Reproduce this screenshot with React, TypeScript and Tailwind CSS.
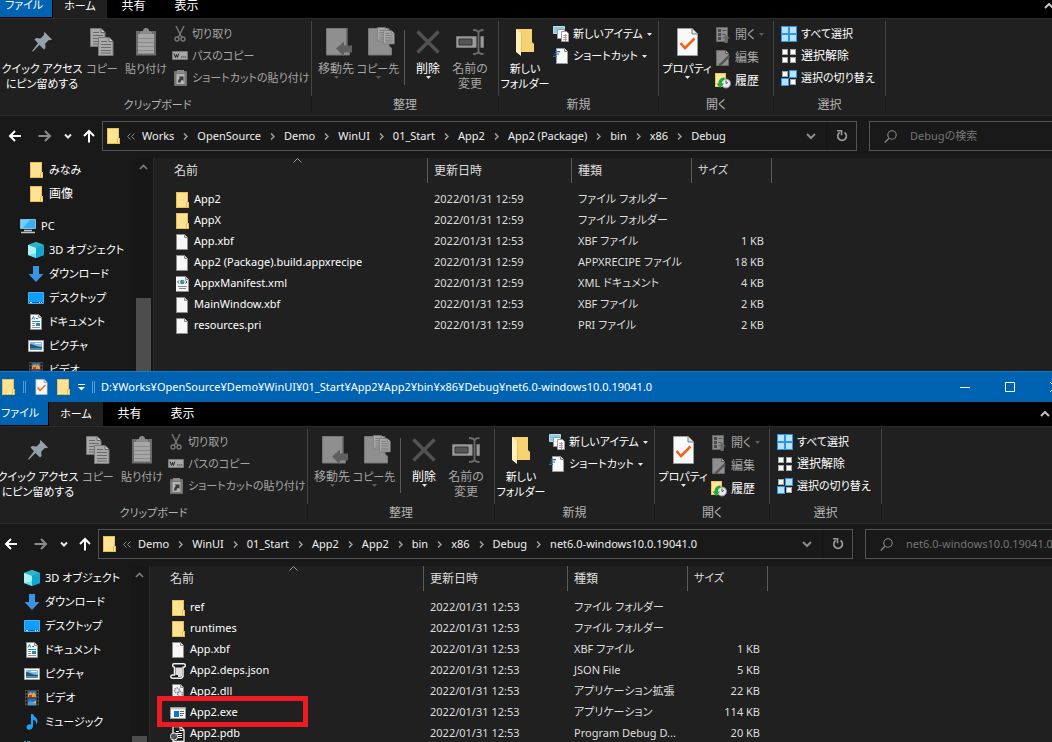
import React from 'react';

type IconProps = { className?: string };

/* Labels made mostly of kanji are set one step larger than kana and Latin ones. */
const kanjiLabel = /^[\u4e00-\u9fff]+[のく]?$/;
const textSize = (label: string) => (kanjiLabel.test(label) ? 'text-xs' : 'text-[11px]');

/* ---------- shared small drawings ---------- */

const Folder = ({ className = '' }: IconProps) => (
  <svg width="16" height="16" viewBox="0 0 16 16" className={`shrink-0 ${className}`} aria-hidden="true">
    <path d="M0 0h12v10h1v6H0z" fill="#e8bf4e" />
    <path d="M1 1h10v14H1z" fill="#ffe392" />
    <path d="M10.500 11h1.500v4h-1.500z" fill="#ffe9a8" />
    <path d="M10.500 10.500v5" stroke="#e8bf4e" />
  </svg>
);

const Page = ({ children }: { children?: React.ReactNode }) => (
  <svg width="16" height="16" viewBox="0 0 16 16" className="shrink-0" aria-hidden="true">
    <path d="M.5 .5h8l3 3v12H.5z" fill="#f7f7f7" stroke="#8d8d8d" />
    <path d="M8.500 .5v3h3" fill="#d8d8d8" stroke="#8d8d8d" />
    {children}
  </svg>
);

const XmlFile = () => (
  <svg width="16" height="16" viewBox="1 0 16 16" className="shrink-0" aria-hidden="true">
    <path d="M.5 .5h10l3 3v12H.5z" fill="#f7f7f7" stroke="#8d8d8d" />
    <path d="M10.500 .5v3h3" fill="#d8d8d8" stroke="#8d8d8d" />
    <path d="M4 4.500L2.500 6 4 7.500M10.500 4.500L12 6l-1.500 1.500" stroke="#444" fill="none" />
    <circle cx="7.300" cy="6" r="2.300" fill="#2a8a9c" />
    <circle cx="7.800" cy="5.500" r="1" fill="#59c36a" />
    <path d="M3 10.500h9M4 12.500h7" stroke="#888" />
  </svg>
);

const JsonFile = () => (
  <svg width="16" height="16" viewBox="0 0 16 16" className="-ml-0.5 mr-0.5 shrink-0" aria-hidden="true">
    <path d="M4 .8h9.700c1 0 1.600.7 1.600 1.700s-.6 1.700-1.600 1.700H13v8.300c0 1.700-1 2.700-2.500 2.700H2.300C1.300 15.200.8 14.400.8 13.600S1.300 12 2.300 12H4.500V4.200C3 4 2.700 3.300 2.700 2.500S3.200.8 4 .8z" fill="#151515" stroke="#f2f2f2" strokeWidth="1.500" />
    <path d="M5.500 4.500h6.500v8c0 1-.6 1.500-1.500 1.500H8V12H5.500z" fill="#dcdcdc" />
  </svg>
);

const DllFile = () => (
  <Page>
    <circle cx="5" cy="6.500" r="2.500" fill="#e4e8ec" stroke="#7e8b96" strokeDasharray="1.500 .7" strokeWidth="1.400" />
    <circle cx="8" cy="10" r="2.500" fill="#e4e8ec" stroke="#7e8b96" strokeDasharray="1.500 .7" strokeWidth="1.400" />
  </Page>
);

const ExeFile = () => (
  <svg width="16" height="16" viewBox="0 0 16 16" className="-ml-0.5 mr-0.5 shrink-0" aria-hidden="true">
    <path d="M.5 2.500h15v11H.5z" fill="#fafafa" stroke="#9b9b9b" />
    <path d="M1 3h14v1.500H1z" fill="#c9c9c9" />
    <path d="M4 6h5v6H4z" fill="#0a78d4" />
    <path d="M10 6.500h4M10 8.500h4M10 10.500h3" stroke="#666" />
  </svg>
);

const PdbFile = () => (
  <svg width="16" height="16" viewBox="0 0 16 16" className="-ml-0.5 mr-0.5 shrink-0" aria-hidden="true">
    <path d="M3 .7h7.500l3.500 3.300v11.300H3z" fill="#1c1c1c" stroke="#f2f2f2" strokeWidth="1.300" />
    <path d="M10 1v3.500h4M6 5.500h3M6 7.500h6M8 9.500h4M8 11.500h4" stroke="#f2f2f2" fill="none" />
    <circle cx="4" cy="10.500" r="3.600" fill="#4a4a4a" stroke="#f2f2f2" />
    <path d="M1.500 13l5-5" stroke="#777" />
  </svg>
);

const CheckPage = ({ className = '' }: IconProps) => (
  <svg viewBox="0 0 21 28" className={className} aria-hidden="true">
    <path d="M.5 .5h14.500l5.500 5.500v21.500H.5z" fill="#f9f9f9" stroke="#9c9c9c" />
    <path d="M15 .5V6h5.500" fill="#e2e2e2" stroke="#7a7a7a" />
    <path d="M3.500 15l4.500 5L17.500 10.500" fill="none" stroke="#f0641e" strokeWidth="2.600" />
  </svg>
);

const Caret = ({ dim = false }: { dim?: boolean }) => (
  <svg width="5" height="3" viewBox="0 0 5 3" aria-hidden="true">
    <path d="M0 0h5L2.500 3z" fill={dim ? '#5c5c5c' : '#e6e6e6'} />
  </svg>
);

/* ---------- navigation tree drawings ---------- */

const Pc = () => (
  <svg width="16" height="16" viewBox="0 0 16 16" className="shrink-0" aria-hidden="true">
    <path d="M.5 1.500h15v9H.5z" fill="#35b0f5" stroke="#8fb9cf" />
    <path d="M1 2h9l-7 8H1z" fill="#6fcdff" />
    <path d="M4 12.500h8M1 14.500h14" stroke="#b5c6d1" strokeWidth="1.500" />
  </svg>
);
const Cube = () => (
  <svg width="16" height="16" viewBox="0 0 16 16" className="shrink-0" aria-hidden="true">
    <path d="M8 0l8 3v10l-8 3-8-3V3z" fill="#12a5cb" />
    <path d="M0 3l8-3 8 3-8 3z" fill="#2fb4c6" />
    <path d="M0 3l8 3v10l-8-3z" fill="#6fe0ea" />
    <path d="M0 3l8 3v5L0 13z" fill="#aef0f4" />
    <path d="M8 6l8-3v10l-8 3z" fill="#12a5d0" />
  </svg>
);
const Down = () => (
  <svg width="16" height="16" viewBox="0 0 16 16" className="shrink-0" aria-hidden="true">
    <path d="M5 0h6v8h4.500L8 16 .5 8H5z" fill="#3a93e4" />
  </svg>
);
const Desktop = () => (
  <svg width="16" height="16" viewBox="0 0 16 16" className="shrink-0" aria-hidden="true">
    <path d="M.5 2.500h15v11H.5z" fill="#129dfc" stroke="#3fb2ff" />
    <path d="M1 12.500h14" stroke="#0a63a8" />
    <path d="M2 12.500h2M11 12.500h1M13 12.500h1" stroke="#fff" />
  </svg>
);
const Doc = () => (
  <svg width="16" height="16" viewBox="0 0 16 16" className="shrink-0" aria-hidden="true">
    <path d="M2.500 .5h8l3 3v12h-11z" fill="#f7f7f7" stroke="#8d8d8d" />
    <path d="M10.500 .5v3h3" fill="#d8d8d8" stroke="#8d8d8d" />
    <path d="M4 5.500l1.500-3 1 3M8 4.500h2M4 7.500h8" stroke="#2b85c9" fill="none" />
    <path d="M4 9.500h3M4 11.500h3M4 13.500h8" stroke="#8899a6" />
    <path d="M8 9h4v3H8z" fill="#2783b8" />
  </svg>
);
const Picture = () => (
  <svg width="16" height="16" viewBox="0 0 16 16" className="shrink-0" aria-hidden="true">
    <path d="M.5 2.500h15v11H.5z" fill="#fff" stroke="#a5a5a5" />
    <path d="M2 4h12v8H2z" fill="#83bdea" />
    <path d="M2 6c4 0 6 3 12 3v1.500H2z" fill="#2b5470" />
    <path d="M2 10h12v2H2z" fill="#4a8fb8" />
    <path d="M7 5.500h6" stroke="#eaf5fc" />
  </svg>
);
const Video = () => (
  <svg width="16" height="16" viewBox="0 0 16 16" className="shrink-0" aria-hidden="true">
    <path d="M1 0h14v16H1z" fill="#4a4a4a" />
    <path d="M2.500 1v15M13.500 1v15" stroke="#111" strokeDasharray="2 1.500" strokeWidth="1.500" />
    <path d="M4 1h8v6H4zM4 9h8v6H4z" fill="#2c66c6" />
    <path d="M4 4l3-2 1 2 2-2 2 3v2H4z" fill="#e0a634" />
    <path d="M5 5h3v2H5z" fill="#c8334a" />
    <path d="M4 12l3-1 2 1 3-1v4H4z" fill="#3f9fe0" />
    <path d="M8 13l4-2v2z" fill="#e9b93e" />
  </svg>
);
const Music = () => (
  <svg width="16" height="16" viewBox="0 0 16 16" className="shrink-0" aria-hidden="true">
    <path d="M7 0h2c.3 2.500 4.500 3.500 4.500 7 0 1.500-.6 2.500-1.500 3.500.7-3-1-4-3-4.700V12c0 2-1.600 3.700-3.600 3.700S2.500 14.600 2.500 13 4 10.300 5.500 10.300c.6 0 1 .1 1.500.4z" fill="#1fa0fa" />
  </svg>
);
const Drive = () => (
  <svg width="16" height="16" viewBox="0 0 16 16" className="shrink-0" aria-hidden="true">
    <path d="M0 3h2v2H0zM3 3h3v2H3z" fill="#1aa6c8" />
    <path d="M.5 6.500h15v6H.5z" fill="#b9c3ca" stroke="#8c969c" />
  </svg>
);

/* ---------- ribbon drawings ---------- */

const Pin = () => (
  <svg width="22" height="22" viewBox="0 0 22 22" aria-hidden="true">
    <path d="M13.500 1L21 8.500l-2 .8-1.200-.3-3.600 3.800.3 4.200L13 18.500l-4.600-4.600L2 20.500 1 20l6-7.800L3.500 8.500 5 7l4.600.4 3.600-3.700-.4-1.300z" fill="#93a1ab" />
  </svg>
);
const SheetLines = ({ x, y }: { x: number; y: number }) => (
  <g transform={`translate(${x} ${y})`}>
    <path d="M.5 .5h10.500l4 4v14H.5z" fill="#a9a9a9" stroke="#777" />
    <path d="M11 .5v4h4" fill="#ccc" stroke="#666" />
    <path d="M3 4.500h6M3 7.500h10M3 10.500h10M3 13.500h10M3 16h10" stroke="#6a6a6a" />
  </g>
);
const Copy = () => (
  <svg width="26" height="28" viewBox="0 0 26 28" aria-hidden="true">
    <SheetLines x={1} y={0} />
    <SheetLines x={9} y={9} />
  </svg>
);
const Paste = () => (
  <svg width="22" height="28" viewBox="0 0 22 28" aria-hidden="true">
    <path d="M1 3h20v24.500H1z" fill="#6b6b6b" />
    <path d="M3 6h16v19.500H3z" fill="#a6a6a6" />
    <path d="M3 10.500h16M3 14.500h16M3 18.500h16M3 22.500h16" stroke="#8a8a8a" />
    <path d="M5 6V4l3-1c0-2 1-3 3-3s3 1 3 3l3 1v2z" fill="#8b8b8b" />
  </svg>
);
const MoveTo = () => (
  <svg width="34" height="30" viewBox="-6 0 34 30" aria-hidden="true">
    <path d="M1.500 1.500h20.500v17.500l2.500 2v7h-23z" fill="#8f8f8f" stroke="#777" />
    <path d="M22 1v18" stroke="#5e5e5e" />
    <path d="M11 21.500l8-7v4h8v7h-8v4z" fill="#5f5f5f" />
  </svg>
);
const CopyTo = () => (
  <svg width="34" height="30" viewBox="-6 0 34 30" aria-hidden="true">
    <path d="M1.500 1.500h20.500v17.500l2.500 2v7h-23z" fill="#8f8f8f" stroke="#777" />
    <g transform="translate(10 0) scale(.75)"><SheetLines x={0} y={0} /><SheetLines x={8} y={4} /></g>
  </svg>
);
const Delete = () => (
  <svg width="24" height="24" viewBox="0 0 24 24" aria-hidden="true">
    <path d="M1.500 1.500l21 21M22.500 1.500l-21 21" stroke="#525252" strokeWidth="3.500" />
  </svg>
);
const Rename = () => (
  <svg width="28" height="26" viewBox="0 0 28 26" aria-hidden="true">
    <path d="M.5 7.500h27v11H.5z" fill="#9b9b9b" stroke="#777" />
    <path d="M3 10h13v6H3z" fill="#555" stroke="#333" />
    <path d="M22.500 5v16" stroke="#1f1f1f" strokeWidth="4" />
    <path d="M22.500 2v22M17 1c3 0 5.500.4 5.500 3 0-2.600 2.500-3 5-3M17 25c3 0 5.500-.4 5.500-3 0 2.600 2.500 3 5 3" stroke="#6c6c6c" strokeWidth="1.800" fill="none" />
  </svg>
);
const NewFolder = () => (
  <svg width="20" height="28" viewBox="0 0 20 28" aria-hidden="true">
    <path d="M1 1h16v13l2 2v8H1z" fill="#f6d272" />
    <path d="M1 1l5 4v23l-5-4z" fill="#fff0ba" />
    <path d="M6.500 5v19" stroke="#e6bf5c" />
  </svg>
);
const Cut = () => (
  <svg width="12" height="16" viewBox="0 0 12 16" aria-hidden="true">
    <path d="M2 0l5.500 11M10 0L4.500 11" stroke="#777" strokeWidth="1.400" />
    <circle cx="3" cy="13" r="2" fill="none" stroke="#777" strokeWidth="1.400" />
    <circle cx="9" cy="13" r="2" fill="none" stroke="#777" strokeWidth="1.400" />
  </svg>
);
const CopyPath = () => (
  <svg width="16" height="10" viewBox="0 0 16 10" aria-hidden="true">
    <path d="M.5 .5h15v8H.5z" fill="#a8a8a8" stroke="#777" />
    <path d="M2 2.500l1.500 4 1-3 1 3 1.200-4M9 6h1.200M11.200 6h1.200M13.200 6h1" stroke="#222" fill="none" />
  </svg>
);
const PasteLink = () => (
  <svg width="13" height="16" viewBox="0 0 13 16" aria-hidden="true">
    <path d="M.5 1.500h12v14H.5z" fill="#777" stroke="#707070" />
    <path d="M3 0h7v3H3z" fill="#8a8a8a" />
    <path d="M2.500 4h8v10h-8z" fill="#b4b4b4" />
    <path d="M4 12.500c0-2 .6-3.500 2-4.500L4.800 6.500H9.500V11L8 9.700c-1 .6-1.500 1.500-1.500 2.800z" fill="#3a3a3a" />
  </svg>
);
const NewItem = () => (
  <svg width="16" height="16" viewBox="0 0 16 16" aria-hidden="true">
    <path d="M.5 .5h11v7H.5z" fill="#7fd0ee" stroke="#c4dbe6" />
    <path d="M4.500 3.500h7v9h-7z" fill="#fafafa" stroke="#999" />
    <path d="M8.500 5.500h5l2 2v8h-7z" fill="#fff" stroke="#999" />
    <path d="M10 9.500h4M10 11.500h4M10 13.500h4" stroke="#e0948b" />
    <path d="M12.500 8v7" stroke="#8ba5d0" />
  </svg>
);
const Shortcut = () => (
  <svg width="16" height="16" viewBox="0 0 16 16" aria-hidden="true">
    <path d="M3.500 .5h8l3 3v12h-11z" fill="#fafafa" stroke="#9a9a9a" />
    <path d="M11.500 .5v3h3" fill="#ddd" stroke="#888" />
    <path d="M2 3.700h5M1 6h5M0 8.300h4" stroke="#1f6fb8" strokeWidth="1.200" />
  </svg>
);
const Open = () => (
  <svg width="14" height="16" viewBox="0 0 14 16" aria-hidden="true">
    <path d="M.5 .5h11v14H.5z" fill="#8c8c8c" stroke="#666" />
    <path d="M2 2h3v3H2zM2 6h3v3H2zM2 10h3v3H2z" fill="#4a4a4a" />
    <path d="M6.500 3.500h4M6.500 7.500h3" stroke="#555" />
    <path d="M10 7.500l4 4h-2.500V16h-3v-4.500H6z" fill="#6a6a6a" />
  </svg>
);
const Edit = () => (
  <svg width="14" height="16" viewBox="0 0 14 16" aria-hidden="true">
    <path d="M.5 .5h9l3 3v12H.5z" fill="#8f8f8f" stroke="#6a6a6a" />
    <path d="M9.500 .5v3h3" fill="#bbb" stroke="#555" />
    <path d="M13.500 5.500L5 14l-2 1" stroke="#505050" strokeWidth="2.200" fill="none" />
  </svg>
);
const History = () => (
  <svg width="16" height="16" viewBox="0 0 16 16" aria-hidden="true">
    <path d="M0 0h11v14H0z" fill="#e8c45a" />
    <path d="M1 1h9v12H1z" fill="#ffe596" />
    <circle cx="11" cy="10.500" r="4.500" fill="#e8ebee" stroke="#8b9196" />
    <path d="M11 7.500V10.500l2-1" stroke="#555" fill="none" />
    <path d="M9.500 4.500c-4 0-6 2.500-6 6H1.500l3.700 4.500L9 10.500H6.700c0-2 .8-3.500 2.800-3.800z" fill="#1fa83c" />
  </svg>
);
const squares = [[0, 0], [9, 0], [0, 9], [9, 9]];
const SelectIcon = ({ on }: { on: boolean[] }) => (
  <svg width="16" height="16" viewBox="0 0 16 16" aria-hidden="true" shapeRendering="crispEdges">
    {squares.map(([x, y], i) =>
      on[i] ? (
        <g key={i}>
          <rect x={x ? 8 : 0} y={y ? 8 : 0} width="8" height="8" fill="#2f95ea" />
          <rect x={x ? 9 : 1} y={y ? 9 : 1} width="6" height="6" fill="#b9e2ff" />
        </g>
      ) : (
        <g key={i}>
          <rect x={x || 1} y={y || 1} width="6" height="6" fill="#a8a8a8" />
          <rect x={(x || 1) + 1} y={(y || 1) + 1} width="4" height="4" fill="#fff" />
        </g>
      ),
    )}
  </svg>
);

/* ---------- ribbon ---------- */

type BigProps = { icon: React.ReactNode; lines: string[]; width: string; dim?: boolean; caret?: 'on' | 'dim' };
const BigButton = ({ icon, lines, width, dim, caret }: BigProps) => (
  <button className={`flex shrink-0 flex-col items-center pt-1.5 ${width} ${dim ? 'text-[#a6a6a6]' : 'text-white'}`}>
    <span className="flex h-[30px] items-center">{icon}</span>
    <span className="mt-1 flex flex-col items-center whitespace-nowrap">
      {lines.map((l) => (
        <span key={l} className={`h-[15px] ${textSize(l)} leading-[15px]`}>{l}</span>
      ))}
    </span>
    {caret && <Caret dim={caret === 'dim'} />}
  </button>
);

type SmallProps = { icon: React.ReactNode; label: string; dim?: boolean; caret?: 'on' | 'dim'; tall?: boolean };
const SmallButton = ({ icon, label, dim, caret, tall }: SmallProps) => (
  <button className={`flex items-center gap-1 whitespace-nowrap ${tall ? 'h-[23px]' : 'h-[22px]'} ${textSize(label)} ${dim ? 'text-[#a6a6a6]' : 'text-white'}`}>
    <span className="flex w-4 justify-center">{icon}</span>
    {label}
    {caret && <Caret dim={caret === 'dim'} />}
  </button>
);

const Group = ({ label, width, children }: { label: string; width: string; children: React.ReactNode }) => (
  <section className={`flex shrink-0 flex-col pt-0.5 ${width}`}>
    <div className="flex h-[75px] items-start border-r border-[#444]">{children}</div>
    <h2 className={`h-4 border-r border-[#181818] text-center ${textSize(label)} leading-[18px] text-[#b4b4b4]`}>{label}</h2>
  </section>
);

const Ribbon = () => (
  <div className="flex h-[98px] shrink-0 border-y border-[#2d2d2d] bg-[#202020] pl-1">
    <Group label="クリップボード" width="w-[308px]">
      <BigButton icon={<Pin />} lines={['クイック アクセス', 'にピン留めする']} width="w-[76px]" />
      <BigButton icon={<Copy />} lines={['コピー']} width="w-11" dim />
      <BigButton icon={<Paste />} lines={['貼り付け']} width="w-11" dim />
      <div className="flex flex-col items-start pt-0.5 pl-1">
        <SmallButton icon={<Cut />} label="切り取り" dim />
        <SmallButton icon={<CopyPath />} label="パスのコピー" dim />
        <SmallButton icon={<PasteLink />} label="ショートカットの貼り付け" dim />
      </div>
    </Group>
    <Group label="整理" width="w-[187px]">
      <div className="flex pl-[3px]">
        <BigButton icon={<MoveTo />} lines={['移動先']} width="w-[42px]" dim caret="dim" />
        <BigButton icon={<CopyTo />} lines={['コピー先']} width="w-[42px]" dim caret="dim" />
        <span className="mt-[9px] mr-0.5 ml-[5px] h-[55px] w-px bg-[#5a5a5a]" />
        <BigButton icon={<Delete />} lines={['削除']} width="w-[42px]" caret="on" />
        <BigButton icon={<Rename />} lines={['名前の', '変更']} width="w-[42px]" dim />
      </div>
    </Group>
    <Group label="新規" width="w-[160px]">
      <div className="flex gap-1 pl-0.5">
        <BigButton icon={<NewFolder />} lines={['新しい', 'フォルダー']} width="w-12" />
        <div className="flex flex-col items-start pt-0.5">
          <SmallButton icon={<NewItem />} label="新しいアイテム" caret="on" />
          <SmallButton icon={<Shortcut />} label="ショートカット" caret="on" />
        </div>
      </div>
    </Group>
    <Group label="開く" width="w-[115px]">
      <div className="flex gap-1 pl-1">
        <BigButton icon={<CheckPage className="h-7 w-[21px]" />} lines={['プロパティ']} width="w-12" caret="on" />
        <div className="flex flex-col items-start pt-0.5">
          <SmallButton icon={<Open />} label="開く" dim caret="dim" tall />
          <SmallButton icon={<Edit />} label="編集" dim tall />
          <SmallButton icon={<History />} label="履歴" tall />
        </div>
      </div>
    </Group>
    <Group label="選択" width="w-28">
      <div className="flex flex-col items-start pt-0.5 pl-[7px]">
        <SmallButton icon={<SelectIcon on={[true, true, true, true]} />} label="すべて選択" />
        <SmallButton icon={<SelectIcon on={[false, false, false, false]} />} label="選択解除" />
        <SmallButton icon={<SelectIcon on={[false, true, true, false]} />} label="選択の切り替え" />
      </div>
    </Group>
  </div>
);

const Tabs = ({ height }: { height: string }) => (
  <div className={`flex shrink-0 items-end overflow-hidden bg-black text-white ${height}`}>
    <button className="mb-px h-[23px] w-[52px] bg-[#0063b1] pr-1">ファイル</button>
    <button className="ml-px h-6 w-[54px] bg-[#202020]">ホーム</button>
    <button className="h-6 w-[53px] text-xs">共有</button>
    <button className="h-6 w-[53px] text-xs">表示</button>
    <button aria-label="リボンの最小化" className="mr-0.5 ml-auto flex h-6 items-center">
      <svg width="10" height="6" viewBox="0 0 10 6" aria-hidden="true">
        <path d="M1 5l4-4 4 4" fill="none" stroke="#c4c4c4" strokeWidth="2" />
      </svg>
    </button>
  </div>
);

/* ---------- address row ---------- */

const Arrow = ({ d, color, label, box }: { d: string; color: string; label: string; box: string }) => (
  <button aria-label={label} className={`flex shrink-0 items-center justify-center ${box}`}>
    <svg width="14" height="14" viewBox="0 0 14 14" aria-hidden="true">
      <path d={d} fill="none" stroke={color} strokeWidth="2" />
    </svg>
  </button>
);

const AddressRow = ({ crumbs, search }: { crumbs: string[]; search: string }) => (
  <div className="flex h-[42px] shrink-0 bg-[#191919] pt-[5px] pb-[7px] pl-1">
    <nav className="flex w-[98px] shrink-0 items-center">
      <Arrow label="戻る" box="w-[22px]" color="#fff" d="M13 7H2M7 2L2 7l5 5" />
      <Arrow label="進む" box="ml-2 w-[22px]" color="#8a8a8a" d="M.5 7H12M7 2l5 5-5 5" />
      <Arrow label="最近の場所" box="ml-0.5 w-5" color="#e8e8e8" d="M4 5.500l3 3 3-3" />
      <Arrow label="上へ" box="w-[22px]" color="#fff" d="M7 13.500V2M2 7l5-5 5 5" />
    </nav>
    <div className="flex min-w-0 flex-1 items-center border border-[#535353] text-[#f0f0f0]">
      <Folder className="ml-1" />
      <svg width="8" height="7" viewBox="0 0 8 7" className="mr-[7px] ml-1 shrink-0" aria-hidden="true">
        <path d="M3.500 .5l-3 3 3 3M7.500 .5l-3 3 3 3" fill="none" stroke="#8a8a8a" />
      </svg>
      {crumbs.map((c, i) => (
        <React.Fragment key={i}>
          {i > 0 && (
            <svg width="5" height="7" viewBox="0 0 5 7" className="mx-[9px] shrink-0" aria-hidden="true">
              <path d="M1 .5l3 3-3 3" fill="none" stroke="#a0a0a0" strokeWidth="1.500" />
            </svg>
          )}
          <button className="whitespace-nowrap">{c}</button>
        </React.Fragment>
      ))}
      <button aria-label="履歴" className="ml-auto flex h-full w-[30px] shrink-0 items-center justify-center">
        <svg width="10" height="7" viewBox="0 0 10 7" aria-hidden="true">
          <path d="M1 1l4 4 4-4" fill="none" stroke="#8c8c8c" strokeWidth="2" />
        </svg>
      </button>
      <button aria-label="更新" className="flex h-full w-[30px] shrink-0 items-center justify-center border-l border-[#141414]">
        <svg width="12" height="12" viewBox="0 0 12 12" aria-hidden="true">
          <path d="M8.500 2.500A4.300 4.300 0 1 1 3.700 2.500" fill="none" stroke="#9a9a9a" strokeWidth="1.700" />
          <path d="M1 .8h4.500v4.500" fill="none" stroke="#9a9a9a" strokeWidth="1.600" />
        </svg>
      </button>
    </div>
    <label className="ml-3 flex w-[187px] shrink-0 items-center border border-r-0 border-[#535353] pl-3.5">
      <svg width="13" height="13" viewBox="0 0 13 13" className="shrink-0" aria-hidden="true">
        <circle cx="8" cy="5" r="4.200" fill="none" stroke="#8a8a8a" strokeWidth="1.100" />
        <path d="M5 8.200L.7 12.500" stroke="#8a8a8a" strokeWidth="1.300" />
      </svg>
      <input type="text" aria-label={search} placeholder={search} className="ml-[13px] w-full min-w-0 bg-transparent text-white outline-none placeholder:text-[#757575]" />
    </label>
  </div>
);

/* ---------- body ---------- */

type TreeItem = { icon: React.ReactNode; label: string; root?: boolean };
const pcItems: TreeItem[] = [
  { icon: <Cube />, label: '3D オブジェクト' },
  { icon: <Down />, label: 'ダウンロード' },
  { icon: <Desktop />, label: 'デスクトップ' },
  { icon: <Doc />, label: 'ドキュメント' },
  { icon: <Picture />, label: 'ピクチャ' },
  { icon: <Video />, label: 'ビデオ' },
  { icon: <Music />, label: 'ミュージック' },
  { icon: <Drive />, label: 'OS (C:)' },
];
const quickItems: TreeItem[] = [
  { icon: <Folder className="-mr-0.5 ml-0.5" />, label: 'みなみ' },
  { icon: <Folder className="-mr-0.5 ml-0.5" />, label: '画像' },
  { icon: <Pc />, label: 'PC', root: true },
];

type FileRow = { icon: React.ReactNode; name: string; date: string; type: string; size?: string; marked?: boolean };

const HeaderCell = ({ label, first }: { label: string; first?: boolean }) => (
  <th className={`relative border-r border-[#5c5c5c] p-0 text-left font-normal text-[#dedede] ${textSize(label)} ${first ? 'pl-5' : 'pl-1.5'}`}>
    <button>{label}</button>
    {first && (
      <svg width="9" height="5" viewBox="0 0 9 5" className="absolute top-0 left-1/2 ml-0.5" aria-hidden="true">
        <path d="M.5 4.500l4-4 4 4" fill="none" stroke="#9a9a9a" />
      </svg>
    )}
  </th>
);

const Body = ({ tree, files, thumb }: { tree: TreeItem[]; files: FileRow[]; thumb: string }) => (
  <div className="flex min-h-0 flex-1 overflow-hidden bg-[#191919]">
    <nav className="w-[135px] shrink-0 text-white">
      {tree.map((t) => (
        <a key={t.label} href="#" className={`flex h-6 items-center gap-[5px] whitespace-nowrap ${textSize(t.label)} ${t.root ? 'mt-2 pl-5' : 'pl-7'}`}>
          {t.icon}
          {t.label}
        </a>
      ))}
    </nav>
    <div className="relative flex w-[18px] shrink-0 flex-col items-start bg-[#171717] pr-0.5 pl-px">
      <svg width="9" height="6" viewBox="0 0 9 6" className="absolute top-1.5 left-1" aria-hidden="true">
        <path d="M1 5l3.500-3.500L8 5" fill="none" stroke="#7d7d7d" strokeWidth="1.700" />
      </svg>
      <div className={`w-full flex-1 bg-[#4d4d4d] ${thumb}`} />
    </div>
    <main className="min-w-0 flex-1 border-l border-[#2b2b2b] bg-[#202020]">
      <table className="w-[618px] table-fixed border-separate border-spacing-0 whitespace-nowrap text-[#dedede]">
        <colgroup>
          <col className="w-[274px]" />
          <col className="w-36" />
          <col className="w-[120px]" />
          <col className="w-20" />
        </colgroup>
        <thead>
          <tr className="h-[25px]">
            <HeaderCell label="名前" first />
            <HeaderCell label="更新日時" />
            <HeaderCell label="種類" />
            <HeaderCell label="サイズ" />
          </tr>
        </thead>
        <tbody>
          <tr className="h-1.5" aria-hidden="true">
            <td className="p-0" colSpan={4} />
          </tr>
          {files.map((f) => (
            <tr key={f.name} className="h-[21px]">
              <td className="relative p-0 pl-[22px] text-white">
                <div className="flex h-[21px] items-center gap-0.5">
                  {f.icon}
                  {f.name}
                </div>
                {f.marked && <div className="absolute -top-1.5 left-[7px] z-10 h-[31px] w-[151px] border-[5px] border-[#ed1c24]" />}
              </td>
              <td className="p-0 pl-1.5">{f.date}</td>
              <td className="p-0 pl-1.5">{f.type}</td>
              <td className="p-0 pr-2 text-right">{f.size}</td>
            </tr>
          ))}
        </tbody>
      </table>
    </main>
  </div>
);

const TitleBar = ({ title }: { title: string }) => (
  <header className="-mr-[26px] flex h-[31px] shrink-0 items-center border-t border-[#2079c0] bg-[#0063b1] pl-1.5 text-white">
    <Folder />
    <span className="ml-[5px] h-3 w-[3px] border-x border-[#5b9bd0]" />
    <button aria-label="プロパティ" className="ml-[9px] w-[13px]">
      <CheckPage className="h-4 w-[13px]" />
    </button>
    <button aria-label="新しいフォルダー" className="ml-[9px]">
      <Folder />
    </button>
    <button aria-label="クイック アクセスのカスタマイズ" className="ml-[5px]">
      <svg width="7" height="7" viewBox="0 0 7 7" aria-hidden="true">
        <path d="M0 .5h7" stroke="#fff" />
        <path d="M0 3h7L3.500 6.500z" fill="#fff" />
      </svg>
    </button>
    <span className="ml-[7px] h-3 w-[3px] border-x border-[#5b9bd0]" />
    <h1 className="ml-1.5 whitespace-nowrap">{title}</h1>
    <button aria-label="最小化" className="ml-auto flex h-full w-[45px] items-center justify-center">
      <svg width="10" height="10" viewBox="0 0 10 10" aria-hidden="true"><path d="M0 5.500h10" stroke="#fff" /></svg>
    </button>
    <button aria-label="最大化" className="flex h-full w-[45px] items-center justify-center">
      <svg width="10" height="10" viewBox="0 0 10 10" aria-hidden="true"><path d="M.5 .5h9v9h-9z" fill="none" stroke="#fff" /></svg>
    </button>
    <button aria-label="閉じる" className="flex h-full w-[46px] items-center justify-center">
      <svg width="10" height="10" viewBox="0 0 10 10" aria-hidden="true"><path d="M0 0l10 10M10 0L0 10" stroke="#fff" /></svg>
    </button>
  </header>
);

const folderType = 'ファイル フォルダー';
const debugFiles: FileRow[] = [
  { icon: <Folder />, name: 'App2', date: '2022/01/31 12:59', type: folderType },
  { icon: <Folder />, name: 'AppX', date: '2022/01/31 12:59', type: folderType },
  { icon: <Page />, name: 'App.xbf', date: '2022/01/31 12:53', type: 'XBF ファイル', size: '1 KB' },
  { icon: <Page />, name: 'App2 (Package).build.appxrecipe', date: '2022/01/31 12:59', type: 'APPXRECIPE ファイル', size: '18 KB' },
  { icon: <XmlFile />, name: 'AppxManifest.xml', date: '2022/01/31 12:59', type: 'XML ドキュメント', size: '4 KB' },
  { icon: <Page />, name: 'MainWindow.xbf', date: '2022/01/31 12:53', type: 'XBF ファイル', size: '2 KB' },
  { icon: <Page />, name: 'resources.pri', date: '2022/01/31 12:59', type: 'PRI ファイル', size: '2 KB' },
];
const netFiles: FileRow[] = [
  { icon: <Folder />, name: 'ref', date: '2022/01/31 12:53', type: folderType },
  { icon: <Folder />, name: 'runtimes', date: '2022/01/31 12:53', type: folderType },
  { icon: <Page />, name: 'App.xbf', date: '2022/01/31 12:53', type: 'XBF ファイル', size: '1 KB' },
  { icon: <JsonFile />, name: 'App2.deps.json', date: '2022/01/31 12:53', type: 'JSON File', size: '5 KB' },
  { icon: <DllFile />, name: 'App2.dll', date: '2022/01/31 12:53', type: 'アプリケーション拡張', size: '22 KB' },
  { icon: <ExeFile />, name: 'App2.exe', date: '2022/01/31 12:53', type: 'アプリケーション', size: '114 KB', marked: true },
  { icon: <PdbFile />, name: 'App2.pdb', date: '2022/01/31 12:53', type: 'Program Debug D...', size: '20 KB' },
];

export default function App() {
  return (
    <div className="grid h-screen grid-rows-2 overflow-hidden bg-[#191919] font-['Noto_Sans','Noto_Sans_CJK_JP',sans-serif] text-[11px] [font-feature-settings:'palt']">
      <div className="-mr-1 flex min-h-0 min-w-0 flex-col overflow-hidden">
        <Tabs height="h-[18px]" />
        <Ribbon />
        <AddressRow
          crumbs={['Works', 'OpenSource', 'Demo', 'WinUI', '01_Start', 'App2', 'App2 (Package)', 'bin', 'x86', 'Debug']}
          search="Debugの検索"
        />
        <Body tree={[...quickItems, ...pcItems]} files={debugFiles} thumb="mt-[140px]" />
      </div>
      <div className="-ml-1 flex min-h-0 min-w-0 flex-col overflow-hidden">
        <TitleBar title="D:¥Works¥OpenSource¥Demo¥WinUI¥01_Start¥App2¥App2¥bin¥x86¥Debug¥net6.0-windows10.0.19041.0" />
        <Tabs height="h-6" />
        <Ribbon />
        <AddressRow
          crumbs={['Demo', 'WinUI', '01_Start', 'App2', 'App2', 'bin', 'x86', 'Debug', 'net6.0-windows10.0.19041.0']}
          search="net6.0-windows10.0.19041.0の検索"
        />
        <Body tree={pcItems} files={netFiles} thumb="mt-[170px]" />
      </div>
    </div>
  );
}
